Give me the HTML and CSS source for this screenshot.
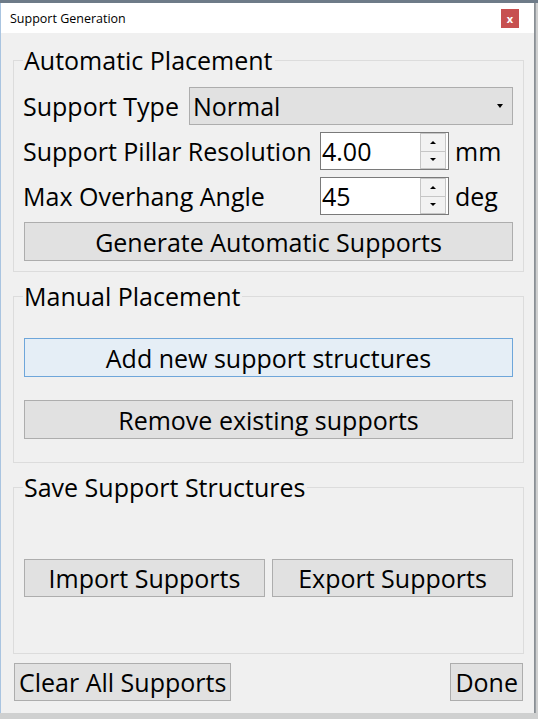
FILE: index.html
```html
<!DOCTYPE html>
<html>
<head>
<meta charset="utf-8">
<link rel="stylesheet" href="styles.css">
</head>
<body>
<div class="window">
  <div class="titlebar">
    <span class="title">Support Generation</span>
    <span class="close">x</span>
  </div>
  <div class="content">
    <fieldset class="group g1">
      <legend>Automatic Placement</legend>
      <div class="row type-row">
        <span class="label type-label">Support Type</span>
        <div class="combo"><span>Normal</span><span class="arrow"></span></div>
      </div>
      <div class="spin-grid">
        <span class="label">Support Pillar Resolution</span>
        <div class="spin"><span class="val">4.00</span><div class="spin-btns"><span class="sb up"></span><span class="sb down"></span></div></div>
        <span class="unit">mm</span>
        <span class="label">Max Overhang Angle</span>
        <div class="spin"><span class="val">45</span><div class="spin-btns"><span class="sb up"></span><span class="sb down"></span></div></div>
        <span class="unit">deg</span>
      </div>
      <button class="btn wide">Generate Automatic Supports</button>
    </fieldset>
    <fieldset class="group g2">
      <legend>Manual Placement</legend>
      <button class="btn wide hover">Add new support structures</button>
      <button class="btn wide">Remove existing supports</button>
    </fieldset>
    <fieldset class="group g3">
      <legend>Save Support Structures</legend>
      <div class="pair">
        <button class="btn">Import Supports</button>
        <button class="btn">Export Supports</button>
      </div>
    </fieldset>
    <div class="bottom">
      <button class="btn tight">Clear All Supports</button>
      <button class="btn tight">Done</button>
    </div>
  </div>
</div>
</body>
</html>
```
FILE: styles.css
```css
html, body {
  margin: 0;
  padding: 0;
}
body {
  width: 538px;
  height: 719px;
  overflow: hidden;
  background: #cfd0d0;
  border-top: 3px solid #6e7b88;
  box-sizing: border-box;
  font-family: "Open Sans", "Noto Sans", sans-serif;
  color: #000;
}
.window {
  margin-left: 0;
  width: 533px;
  border-left: 1px solid #a9c4e0;
  background: #f0f0f0;
  box-shadow: 1px 0 0 #8a8f94, 2px 0 0 #9a9fa4;
}
.titlebar {
  height: 30px;
  background: #fff;
  display: flex;
  align-items: center;
  justify-content: space-between;
  padding: 0 15px 0 9px;
}
.title {
  font-size: 12.5px;
  color: #000;
}
.close {
  width: 18px;
  height: 19px;
  background: #c75050;
  color: #fff;
  font-size: 11px;
  font-weight: bold;
  display: flex;
  align-items: center;
  justify-content: center;
  margin-top: 1px;
}
.content {
  padding: 12px 10px 12px 12px;
  display: flex;
  flex-direction: column;
  gap: 9px;
  font-size: 25px;
}
.group {
  margin: 0;
  border: 1px solid #dcdcdc;
  padding: 0 10px;
  min-width: 0;
  display: flex;
  flex-direction: column;
}
.group legend {
  padding: 0 2px 0 1px;
  line-height: 30px;
  font-size: 25px;
  margin-left: -1px;
}
.g1 {
  padding-top: 12px;
  padding-bottom: 10px;
  gap: 7px;
}
.g2 {
  padding-top: 27px;
  padding-bottom: 23px;
  gap: 23px;
}
.g3 {
  padding-top: 57px;
  padding-bottom: 56px;
}
.row {
  display: flex;
  align-items: center;
}
.label {
  line-height: 38px;
  white-space: nowrap;
  margin-left: -1px;
}
.type-label {
  width: 161px;
}
.type-row {
  gap: 5px;
}
.combo {
  flex: 1;
  height: 38px;
  box-sizing: border-box;
  background: #e1e1e1;
  border: 1px solid #adadad;
  display: flex;
  align-items: center;
  justify-content: space-between;
  padding: 0 9px 0 3px;
}
.arrow {
  width: 0;
  height: 0;
  border-left: 3px solid transparent;
  border-right: 3px solid transparent;
  border-top: 4px solid #000;
}
.spin-grid {
  display: grid;
  grid-template-columns: 290px 129px auto;
  column-gap: 6px;
  row-gap: 7px;
  align-items: center;
}
.spin {
  height: 38px;
  box-sizing: border-box;
  border: 1px solid #7a7a7a;
  background: #fff;
  display: flex;
  align-items: center;
  justify-content: space-between;
  padding: 0 2px 0 1px;
}
.spin-btns {
  width: 26px;
  height: 36px;
  display: flex;
  flex-direction: column;
}
.sb {
  flex: 1;
  box-sizing: border-box;
  border: 1px solid #c6c6c6;
  background: #f2f2f2;
  display: flex;
  align-items: center;
  justify-content: center;
}
.sb.down {
  border-top: none;
}
.sb.up::after {
  content: "";
  border-left: 3px solid transparent;
  border-right: 3px solid transparent;
  border-bottom: 3px solid #000;
}
.sb.down::after {
  content: "";
  border-left: 3px solid transparent;
  border-right: 3px solid transparent;
  border-top: 3px solid #000;
}
.unit {
  line-height: 38px;
}
.btn {
  font-family: inherit;
  font-size: 25px;
  color: #000;
  background: #e1e1e1;
  border: 1px solid #adadad;
  height: 39px;
  padding: 0;
  margin: 0;
  line-height: 36px;
}
.btn.hover {
  background: #e5eef6;
  border-color: #6ea6da;
}
.pair {
  display: grid;
  grid-template-columns: 1fr 1fr;
  gap: 7px;
}
.pair .btn {
  height: 38px;
}
.bottom {
  display: flex;
  justify-content: space-between;
  padding: 0 1px 0 1px;
}
.btn.tight {
  height: 38px;
  padding: 0 4px;
}
```
